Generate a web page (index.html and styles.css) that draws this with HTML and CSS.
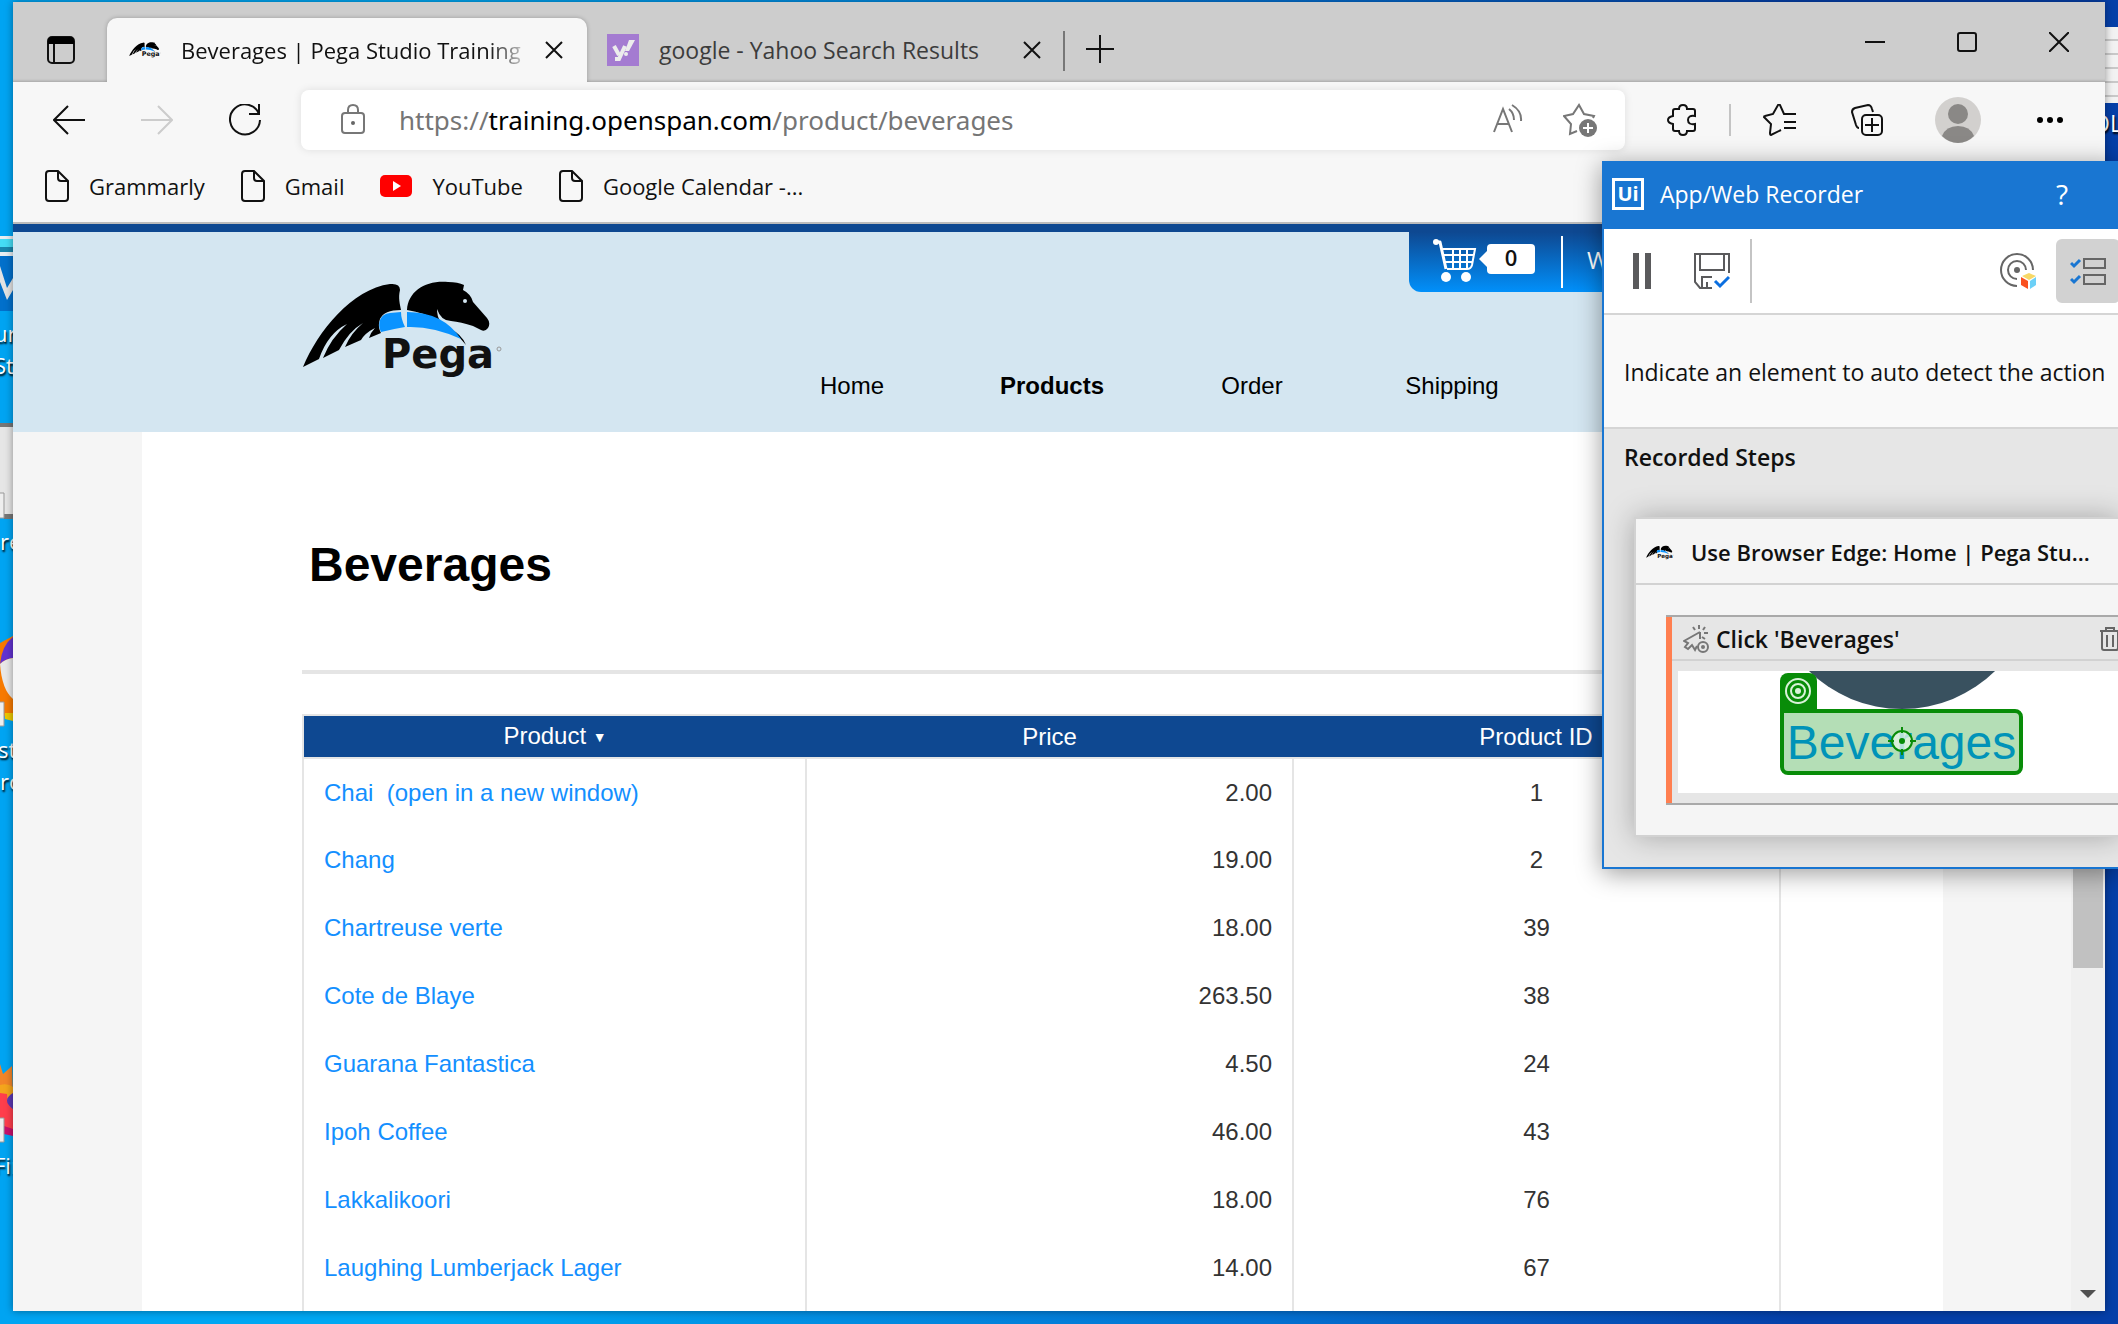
FILE: index.html
```html
<!DOCTYPE html>
<html lang="en">
<head>
<meta charset="utf-8">
<title>Beverages | Pega Studio Training</title>
<link rel="stylesheet" href="styles.css">
</head>
<body>
<svg class="defs" aria-hidden="true">
  <symbol id="pega-logo" viewBox="0 0 200 98">
    <path d="M1 86C16 50 50 8 88 3q10-1 10 6c-2 8 0 14 1 20q-17 0-21 9c-2 6-1 10 1 14l-12 5q2-6 6-10q-10 5-14 12l-16 7q6-14 18-24q-14 8-24 27l-16 8q8-20 24-34Q26 52 17 78z"/>
    <path d="M105 29C106 10 124-1 146 1q10 0 16 3l-1 5q8 4 10 12l14 16q4 5 1 10-3 4-7 2l-8-4q-12-4-22-5q-10 0-14-12q0 14 12 20q12 4 17 16Q140 34 105 29z"/>
    <path class="mark-sky" d="M79 51q-3-6-1-12q2-6 10-7l11-1q0 7 4 15q-12 2-24 5zM105 31q36 0 54 27q-28-13-54-12z"/>
    <circle class="mark-eye" cx="163" cy="20" r="2"/>
    <text class="mark-word" x="80" y="87">Pega</text>
    <circle class="mark-reg" cx="197" cy="68" r="2"/>
  </symbol>
  <symbol id="file" viewBox="0 0 24 32">
    <path class="line" d="M4 1h9l10 10v17q0 3-3 3H4q-3 0-3-3V4q0-3 3-3zM13 1v7q0 3 3 3h7"/>
  </symbol>
</svg>

<div class="desktop">
  <svg class="icons-left" width="13" height="1324" viewBox="0 0 13 1324" aria-hidden="true">
    <path fill="#e8eef2" d="M0 236h13v20H0z"/><path fill="#45dcf5" d="M0 239h13v8H0z"/><path fill="#1a86ad" d="M0 247h13v5H0z"/>
    <path fill="#0270cb" d="M0 256h13v55H0z"/><path fill="#e3e3e3" d="M0 266l7 22 6-10v12l-6 10L0 282z"/>
    <path fill="#e6e6e6" d="M0 425h13v91H0z"/><path fill="#777" d="M0 423h13v4H0zM4 514h9v5H4z"/><path fill="#eee" stroke="#999" d="M-2 493h6v25h-6z"/>
    <path fill="#f77a00" d="M0 643l13-7v84L0 714z"/><path fill="#6233d0" d="M13 637Q2 645 0 664q5-5 13-6z"/><path fill="#e8e8e8" d="M13 658q-8 1-13 6 2 26 13 35z"/>
    <path fill="#eee" stroke="#999" d="M-2 702h6v24h-6z"/><path fill="#ecc800" d="M5 713h8v8l-8-2z"/>
    <path fill="#f38528" d="M0 1064l3 10 9-8 1 30H0z"/><path fill="#f4a51c" d="M0 1085q8-2 13 2v16H0z"/><path fill="#ff3e4c" d="M0 1093l7 1q0 10 6 15v21L0 1126z"/><path fill="#5b39b5" d="M13 1093q-12 7 0 16z"/><path fill="#c8106c" d="M4 1126l9 3v7l-9-2z"/>
    <path fill="#eee" stroke="#999" d="M-2 1118h6v24h-6z"/>
  </svg>
  <div class="labels-left" aria-hidden="true">
    <span class="lbl l1">ur</span><span class="lbl l2">St</span><span class="lbl l3">re</span><span class="lbl l4">st</span><span class="lbl l5">ro</span><span class="lbl l6">Fir</span>
  </div>
  <div class="paper" aria-hidden="true"></div>
  <span class="paper-label">OL</span>

  <div class="browser">
    <header class="tabstrip">
      <button class="tab-actions" aria-label="Tab actions">
        <svg width="28" height="28" viewBox="0 0 28 28"><rect class="line" x="1" y="1" width="26" height="26" rx="4"/><path d="M1 8V5q0-4 4-4h18q4 0 4 4v3z"/><path class="line" d="M7 8v19"/></svg>
      </button>
      <div class="tab tab-active">
        <svg width="32" height="16"><use href="#pega-logo"/></svg>
        <span class="tab-title tab-fade">Beverages | Pega Studio Training</span>
        <button class="tab-close" aria-label="Close tab"><svg width="18" height="18" viewBox="0 0 18 18"><path class="line" d="M1 1l16 16M17 1L1 17"/></svg></button>
      </div>
      <div class="tab tab-idle">
        <svg width="32" height="32" viewBox="0 0 32 32"><path fill="#a47bd1" d="M0 0h32v32H0z"/><path fill="none" stroke="#ececec" stroke-width="4" d="M7 12l5 9M18 12l-6 13H8"/><path fill="#ececec" d="M22 6h6l-6 11h-4z"/><circle fill="#ececec" cx="19" cy="20" r="2"/></svg>
        <span class="tab-title">google - Yahoo Search Results</span>
        <button class="tab-close" aria-label="Close tab"><svg width="18" height="18" viewBox="0 0 18 18"><path class="line" d="M1 1l16 16M17 1L1 17"/></svg></button>
      </div>
      <button class="new-tab" aria-label="New tab"><svg width="28" height="28" viewBox="0 0 28 28"><path class="line" d="M14 0v28M0 14h28"/></svg></button>
      <div class="window-buttons">
        <button aria-label="Minimize"><svg width="20" height="20" viewBox="0 0 20 20"><path class="line" d="M0 10h20"/></svg></button>
        <button aria-label="Maximize"><svg width="20" height="20" viewBox="0 0 20 20"><rect class="line" x="1" y="1" width="18" height="18" rx="2"/></svg></button>
        <button aria-label="Close"><svg width="20" height="20" viewBox="0 0 20 20"><path class="line" d="M0 0l20 20M20 0L0 20"/></svg></button>
      </div>
    </header>

    <div class="toolbar">
      <button aria-label="Back"><svg width="32" height="32" viewBox="0 0 32 32"><path class="line" d="M32 16H1M15 2L1 16l14 14"/></svg></button>
      <button class="disabled" aria-label="Forward"><svg width="32" height="32" viewBox="0 0 32 32"><path class="line" d="M0 16h31M17 2l14 14-14 14"/></svg></button>
      <button aria-label="Refresh"><svg width="32" height="32" viewBox="0 0 32 32"><path class="line" d="M30 10A15 15 0 1 0 31 16M30 0v10H20"/></svg></button>
      <div class="address">
        <svg class="grey" width="24" height="32" viewBox="0 0 24 32"><rect class="line" x="1" y="9" width="22" height="20" rx="3"/><path class="line" d="M7 9V6q0-5 5-5t5 5v3"/><circle cx="12" cy="19" r="2" fill="#666"/></svg>
        <a class="url" href="#">https://<b>training.openspan.com</b>/product/beverages</a>
        <button class="grey" aria-label="Read aloud"><svg width="30" height="32" viewBox="0 0 30 32"><path class="line" d="M1 28L10 5l9 23M4 20h12M16 5q5 4 5 11M19 1q10 6 9 16"/></svg></button>
        <button class="grey" aria-label="Add to favorites"><svg width="34" height="34" viewBox="0 0 34 34"><path class="line" d="M14 28l-7 3 1-10-7-8 9-2 6-9 5 9 10 2-1 2"/><circle cx="25" cy="25" r="9" fill="#777"/><path stroke="#fff" stroke-width="2" d="M25 20v10M20 25h10"/></svg></button>
      </div>
      <div class="tools">
        <button aria-label="Extensions"><svg width="30" height="32" viewBox="0 0 30 32"><path class="line" d="M8 5h4q0-4 4-4t4 4h6q2 0 2 2v5q-7-1-7 4t7 4v5q0 2-2 2h-6q0 4-4 4t-4-4H8q-2 0-2-2v-5q-5-1-5-4t5-4V7q0-2 2-2z"/></svg></button>
        <span class="rule"></span>
        <button aria-label="Favorites"><svg width="34" height="32" viewBox="0 0 34 32"><path class="line" d="M18 26l-10 5q-1 0-1-2l1-9-7-7q0-1 1-1l8-2 5-9q1-1 2 0l4 9h12M21 18h12M21 24h12"/></svg></button>
        <button aria-label="Collections"><svg width="32" height="32" viewBox="0 0 32 32"><rect class="line" x="11" y="11" width="20" height="20" rx="4"/><path class="line" d="M21 14v14M14 21h14M8 24q-2 0-3-3L1 8q0-3 3-4l13-3q3 0 4 4l1 3"/></svg></button>
        <button aria-label="Profile"><svg width="46" height="46" viewBox="0 0 46 46"><circle cx="23" cy="23" r="23" fill="#d2d0ce"/><circle cx="23" cy="17" r="10" fill="#8a8886"/><path fill="#8a8886" d="M7 39q4-10 16-10t16 10q-7 7-16 7T7 39z"/></svg></button>
        <button aria-label="Settings and more"><svg width="26" height="6" viewBox="0 0 26 6"><circle cx="3" cy="3" r="3"/><circle cx="13" cy="3" r="3"/><circle cx="23" cy="3" r="3"/></svg></button>
      </div>
    </div>

    <nav class="bookmarks" aria-label="Bookmarks">
      <a href="#"><svg width="24" height="32"><use href="#file"/></svg>Grammarly</a>
      <a href="#"><svg width="24" height="32"><use href="#file"/></svg>Gmail</a>
      <a href="#"><svg width="32" height="26" viewBox="0 0 32 26"><rect y="2" width="32" height="22" rx="5" fill="#f00"/><path fill="#fff" d="M13 8l8 5-8 5z"/></svg>YouTube</a>
      <a href="#"><svg width="24" height="32"><use href="#file"/></svg>Google Calendar -...</a>
    </nav>

    <div class="viewport">
      <div class="page">
        <header class="site-header">
          <a class="site-logo" href="#" aria-label="Pega"><svg width="200" height="98"><use href="#pega-logo"/></svg></a>
          <nav class="site-nav">
            <a href="#">Home</a><a class="current" href="#">Products</a><a href="#">Order</a><a href="#">Shipping</a>
          </nav>
          <div class="cart">
            <svg width="44" height="44" viewBox="0 0 44 44"><path fill="none" stroke="#fff" stroke-width="2" d="M10 10h32l-3 16q-1 4-5 4H14M11 16h29M12 23h28M20 10v20M27 10v20M34 10v20"/><path fill="none" stroke="#fff" stroke-width="3" stroke-linejoin="round" d="M1 3h6l6 27"/><circle cx="3" cy="3" r="3" fill="#fff"/><circle cx="13" cy="38" r="5" fill="#fff"/><circle cx="33" cy="38" r="5" fill="#fff"/></svg>
            <span class="cart-count">0</span>
            <span class="cart-welcome">Welcome</span>
          </div>
        </header>
        <main class="content">
          <h1>Beverages</h1>
          <table class="products">
            <thead><tr><th>Product <span class="sort">▼</span></th><th>Price</th><th>Product ID</th></tr></thead>
            <tbody>
              <tr><td><a href="#">Chai&nbsp; (open in a new window)</a></td><td>2.00</td><td>1</td></tr>
              <tr><td><a href="#">Chang</a></td><td>19.00</td><td>2</td></tr>
              <tr><td><a href="#">Chartreuse verte</a></td><td>18.00</td><td>39</td></tr>
              <tr><td><a href="#">Cote de Blaye</a></td><td>263.50</td><td>38</td></tr>
              <tr><td><a href="#">Guarana Fantastica</a></td><td>4.50</td><td>24</td></tr>
              <tr><td><a href="#">Ipoh Coffee</a></td><td>46.00</td><td>43</td></tr>
              <tr><td><a href="#">Lakkalikoori</a></td><td>18.00</td><td>76</td></tr>
              <tr><td><a href="#">Laughing Lumberjack Lager</a></td><td>14.00</td><td>67</td></tr>
            </tbody>
          </table>
        </main>
      </div>
      <div class="scrollbar" aria-hidden="true">
        <div class="thumb"></div>
        <svg width="16" height="8" viewBox="0 0 16 8"><path fill="#505050" d="M0 0h16L8 8z"/></svg>
      </div>
    </div>
  </div>

  <section class="recorder" aria-label="App/Web Recorder">
    <header class="rec-title">
      <span class="ui-logo">Ui</span>
      <span class="rec-name">App/Web Recorder</span>
      <button aria-label="Help">?</button>
    </header>
    <div class="rec-tools">
      <button aria-label="Pause"><svg width="36" height="36" viewBox="0 0 36 36"><path fill="#5a5a5c" d="M9 0h6v36H9zM21 0h6v36h-6z"/></svg></button>
      <button aria-label="Save"><svg width="36" height="36" viewBox="0 0 36 36"><path fill="none" stroke="#5a5a5c" stroke-width="2" d="M35 20V1H1v28l5 6h12M6 1v16h24V1M8 35V24h10M13 35v-6"/><path fill="none" stroke="#0b6fe0" stroke-width="3" d="M21 28l5 5 9-9"/></svg></button>
      <span class="rec-rule"></span>
      <button class="push" aria-label="Target"><svg width="36" height="36" viewBox="0 0 36 36"><g fill="none" stroke="#666" stroke-width="2"><path d="M33 17A16 16 0 1 0 17 33M26 17a9 9 0 1 0-9 9"/></g><circle cx="17" cy="17" r="3" fill="#666"/><path fill="#f7d867" d="M22 23l7-3 7 3-7 4z"/><path fill="#fa5120" d="M21 24l7 4v8l-7-4z"/><path fill="#6cd0f7" d="M36 24l-6 4v8l6-4z"/></svg></button>
      <button class="pressed" aria-label="Recorded steps list"><svg width="36" height="28" viewBox="0 0 36 28"><path fill="none" stroke="#666" stroke-width="2" d="M14 2h21v9H14zM14 18h21v9H14z"/><path fill="none" stroke="#1976d2" stroke-width="3" d="M1 6l3 3 6-6M1 22l3 3 6-6"/></svg></button>
    </div>
    <p class="rec-hint">Indicate an element to auto detect the action</p>
    <div class="rec-body">
      <h2>Recorded Steps</h2>
      <div class="card">
        <div class="card-title">
          <svg width="28" height="15"><use href="#pega-logo"/></svg>
          <span>Use Browser Edge: Home | Pega Stu...</span>
        </div>
        <div class="step">
          <div class="step-title">
            <svg width="26" height="28" viewBox="0 0 26 28"><g fill="none" stroke="#777" stroke-width="2"><path d="M17 7L1 16l4 2-3 4 3 2 4-4 3 5 2-4M17 7v7"/><circle cx="20" cy="22" r="5"/><path d="M16 0v4M10 2l2 3M22 2l-2 3M25 8h-4M19 12l3 2"/></g><circle cx="20" cy="22" r="2" fill="#777"/></svg>
            <span>Click 'Beverages'</span>
            <button aria-label="Delete step"><svg width="20" height="24" viewBox="0 0 20 24"><path fill="none" stroke="#666" stroke-width="2" d="M0 4h20M6 4V1h8v3M2 4v17q0 2 2 2h12q2 0 2-2V4M7 8v12M13 8v12"/></svg></button>
          </div>
          <div class="shot">
            <div class="disc"></div>
            <div class="badge"><svg width="26" height="26" viewBox="0 0 26 26"><g fill="none" stroke="#d9f2d9" stroke-width="2"><circle cx="13" cy="13" r="12"/><circle cx="13" cy="13" r="7"/></g><circle cx="13" cy="13" r="3" fill="#d9f2d9"/></svg></div>
            <div class="picked">Beverages
              <svg class="cross" width="28" height="28" viewBox="0 0 28 28"><circle cx="14" cy="14" r="10" fill="#e4f4e4" fill-opacity=".8" stroke="#088c08" stroke-width="2"/><circle cx="14" cy="14" r="3" fill="#088c08"/><path stroke="#088c08" stroke-width="2" d="M14 0v6M14 22v6M0 14h6M22 14h6"/></svg>
            </div>
          </div>
        </div>
      </div>
    </div>
  </section>
</div>
</body>
</html>
```
FILE: styles.css
```css
* { box-sizing: border-box; }

body {
  margin: 0;
  font-family: "Open Sans", "Noto Sans", sans-serif;
  font-size: 23px;
  color: #111;
}

a { color: inherit; text-decoration: none; }
svg { display: block; flex: none; }
button {
  padding: 0;
  border: 0;
  background: none;
  font: inherit;
  color: inherit;
  display: flex;
  align-items: center;
  justify-content: center;
  flex: none;
}

.defs { position: absolute; width: 0; height: 0; }
.line { fill: none; stroke: currentColor; stroke-width: 2; }
.mark-sky { fill: #0a93ff; }
.mark-eye { fill: #d4e6f1; }
.mark-reg { fill: none; stroke: #999; }
.mark-word { fill: #111; font: 700 40px "DejaVu Sans", sans-serif; }
.grey { color: #777; }

/* Desktop */
.desktop {
  position: relative;
  height: 100vh;
  overflow: hidden;
  padding: 2px 13px 13px;
  background: linear-gradient(90deg, #00a4f2 0, #00a8f2 20%, #0470d0 60%, #053fa8 85%, #053fa8 100%);
}
.icons-left { position: absolute; left: 0; top: 0; }
.labels-left { position: absolute; left: 0; top: 0; width: 13px; height: 100%; overflow: hidden; }
.lbl { position: absolute; left: 0; color: #fff; font-size: 22px; line-height: 28px; text-shadow: 1px 2px 2px #000; white-space: nowrap; }
.l1 { top: 319px; left: -6px; }
.l2 { top: 351px; left: -6px; }
.l3 { top: 527px; }
.l4 { top: 735px; left: -2px; }
.l5 { top: 767px; }
.l6 { top: 1151px; left: -6px; }
.paper { position: absolute; right: 0; top: 27px; width: 13px; height: 76px; background: repeating-linear-gradient(#f2f2f2 0 12px, #c8c8c8 12px 14px); }
.paper-label { position: absolute; right: -4px; top: 108px; color: #fff; line-height: 30px; text-shadow: 1px 2px 2px #000; }

/* Browser window */
.browser {
  position: relative;
  height: 100%;
  display: flex;
  flex-direction: column;
  background: #f7f7f7;
  box-shadow: 0 0 8px rgba(0, 0, 0, .4);
}

.tabstrip { flex: none; height: 80px; display: flex; padding-top: 16px; background: #cdcdcd; box-shadow: inset 0 -3px 3px -2px rgba(0, 0, 0, .2); }
.tab-actions { width: 94px; height: 64px; padding: 0 12px 0 14px; }
.tab { display: flex; align-items: center; height: 64px; }
.tab-active { width: 480px; padding: 0 24px 0 22px; background: #f7f7f7; border-radius: 10px 10px 0 0; box-shadow: 0 0 4px rgba(0, 0, 0, .25); clip-path: inset(-6px -6px 0 -6px); }
.tab-title { flex: 1; margin-left: 20px; overflow: hidden; line-height: 32px; white-space: nowrap; }
.tab-fade { margin-right: 22px; font-size: 22px; -webkit-mask-image: linear-gradient(90deg, #000 90%, rgba(0, 0, 0, .2)); mask-image: linear-gradient(90deg, #000 90%, rgba(0, 0, 0, .2)); }
.tab-idle { position: relative; width: 478px; padding: 0 24px 0 20px; color: #3c3c3c; }
.tab-idle::after { content: ""; position: absolute; right: 0; top: 13px; width: 2px; height: 40px; background: #777; }
.tab-idle .tab-close { color: #111; }
.new-tab { width: 70px; height: 62px; }
.window-buttons { margin-left: auto; display: flex; height: 48px; }
.window-buttons button { width: 92px; }

.toolbar { flex: none; height: 74px; display: flex; align-items: center; padding: 2px 42px 0 40px; }
.toolbar > button { width: 32px; margin-right: 56px; }
.toolbar > button:nth-child(3) { margin-right: 40px; }
.disabled { color: #ccc; }
.address {
  flex: 1;
  height: 60px;
  display: flex;
  align-items: center;
  padding: 0 28px 0 40px;
  background: #fff;
  border-radius: 8px;
  box-shadow: 0 0 8px rgba(0, 0, 0, .1);
}
.address button { margin-left: 40px; }
.url { flex: 1; margin-left: 34px; font-family: "Noto Sans", sans-serif; font-size: 26px; line-height: 36px; color: #757575; }
.url b { font-weight: 400; color: #000; }
.tools { display: flex; align-items: center; margin-left: 42px; }
.rule { width: 2px; height: 32px; margin: 0 32px; background: #c4c4c4; }
.tools > :nth-child(4) { margin-left: 54px; }
.tools > :nth-child(5) { margin: 0 56px 0 52px; }

.bookmarks { flex: none; height: 68px; display: flex; align-items: flex-start; padding: 12px 0 0 32px; gap: 36px; border-bottom: 2px solid #bbb; font-size: 22px; }
.bookmarks a { display: flex; align-items: center; gap: 20px; height: 36px; }

/* Web page */
.viewport { flex: 1; min-height: 0; display: flex; border-top: 8px solid #0e4891; }
.page { flex: 1; background: #f5f5f5; font-family: "Liberation Sans", Arial, sans-serif; font-size: 24px; overflow: hidden; }
.site-header { position: relative; height: 200px; display: flex; padding: 0 129px; background: #d4e6f1; }
.site-logo { margin: 49px 0 0 160px; }
.site-nav { display: grid; grid-template-columns: repeat(4, 200px); margin: 140px 0 0 250px; color: #000; line-height: 28px; text-align: center; }
.current { font-weight: 700; }
.cart {
  position: absolute;
  top: -8px;
  right: 129px;
  width: 533px;
  height: 68px;
  display: flex;
  align-items: center;
  padding-left: 24px;
  color: #fff;
  font-family: "Open Sans", sans-serif;
  background: linear-gradient(#0e4891 0, #0e4891 8px, #0190fa);
  border-radius: 0 0 12px 12px;
}
.cart svg { margin-top: 6px; }
.cart-count { position: relative; margin: 2px 0 0 10px; width: 48px; height: 30px; line-height: 26px; text-align: center; font-size: 22px; font-weight: 600; color: #111; background: #fff; border-radius: 4px; }
.cart-count::before { content: ""; position: absolute; left: -8px; top: 7px; border: solid transparent; border-width: 8px 8px 8px 0; border-right-color: #fff; }
.cart-welcome { margin: 8px 0 0 26px; height: 52px; line-height: 48px; padding-left: 24px; border-left: 2px solid #fff; }

.content { min-height: 1000px; margin: 0 128px 0 129px; padding: 105px 162px 0 160px; background: #fff; }
h1 { margin: 0 0 40px; padding: 0 0 77px 7px; border-bottom: 4px solid #e5e5e5; font-size: 48px; line-height: 56px; color: #000; }
.products { width: 100%; table-layout: fixed; border-collapse: collapse; color: #333; border: 2px solid #e5e5e5; }
.products th { height: 43px; padding: 0; background: #0e4891; color: #fff; font-weight: 400; line-height: 28px; border-bottom: 2px solid #e5e5e5; }
.products th:first-child { width: 503px; }
.sort { font-size: 14px; vertical-align: 2px; }
.products td { height: 68px; padding: 0 20px; border-right: 2px solid #e5e5e5; line-height: 28px; }
.products tr:last-child td { height: 100px; padding-bottom: 32px; }
.products td:nth-child(2) { text-align: right; }
.products td:nth-child(3) { text-align: center; }
.products td a { color: #138fff; }

.scrollbar { flex: none; width: 34px; background: #f0f0f0; padding: 0 2px 13px; display: flex; flex-direction: column; align-items: center; justify-content: space-between; }
.thumb { width: 30px; height: 736px; background: #c1c1c1; }

/* Recorder window */
.recorder {
  position: absolute;
  top: 161px;
  right: -2px;
  width: 518px;
  background: #e6e6e6;
  border: 2px solid #1976d2;
  border-width: 0 0 2px 2px;
  box-shadow: 0 4px 24px rgba(0, 0, 0, .4);
}
.rec-title { height: 68px; display: flex; align-items: center; padding: 0 52px 2px 8px; background: #1976d2; color: #fff; }
.ui-logo { width: 32px; height: 32px; border: 3px solid #fff; font-size: 20px; line-height: 25px; font-weight: 700; text-align: center; }
.rec-name { flex: 1; margin-left: 16px; line-height: 32px; }
.rec-title button { font-size: 28px; line-height: 32px; }
.rec-tools { height: 86px; display: flex; align-items: center; padding-left: 20px; background: #fff; border-bottom: 2px solid #d5d5d5; }
.rec-tools button { width: 36px; margin-right: 34px; }
.rec-tools button:nth-child(2) { margin: 0 20px 0 0; }
.rec-rule { width: 2px; height: 64px; background: #c4c4c4; }
.rec-tools .push { margin: 0 20px 0 auto; }
.rec-tools .pressed { width: 64px; height: 64px; margin: 0; background: #d2d2d2; border-radius: 6px; }
.rec-hint { margin: 0; height: 114px; padding-left: 20px; line-height: 114px; background: #f9f9f9; border-bottom: 2px solid #d5d5d5; white-space: nowrap; }
.rec-body { padding: 12px 0 30px 30px; }
h2 { margin: 0 0 44px -10px; font-size: 23px; line-height: 32px; font-weight: 600; }
.card { background: #f5f5f5; border: 2px solid #d2d2d2; border-right: 0; box-shadow: 0 0 28px rgba(0, 0, 0, .28); padding-bottom: 30px; }
.card-title { height: 66px; display: flex; align-items: center; padding: 2px 0 0 10px; gap: 17px; border-bottom: 2px solid #d2d2d2; font-size: 22px; font-weight: 600; white-space: nowrap; }
.step { margin: 30px 0 0 30px; height: 190px; background: #e6e6e6; border: 2px solid #a9a9a9; border-width: 2px 0; box-shadow: inset 6px 0 #ff7f50; }
.step-title { height: 44px; display: flex; align-items: center; margin-left: 6px; padding: 2px 0 0 11px; gap: 7px; border-bottom: 2px solid #d2d2d2; font-weight: 600; }
.step-title span { flex: 1; }
.shot { position: relative; margin: 10px 0 0 12px; height: 122px; background: #fff; overflow: hidden; }
.disc { position: absolute; left: 91px; top: -228px; width: 266px; height: 266px; border-radius: 50%; background: #39515f; }
.badge { position: absolute; left: 102px; top: 2px; width: 37px; height: 46px; padding: 5px; background: #088c08; border-radius: 8px 8px 0 0; }
.picked {
  position: absolute;
  left: 102px;
  top: 38px;
  width: 243px;
  height: 66px;
  border: 4px solid #088c08;
  border-radius: 0 8px 8px 8px;
  background: #b4deb6;
  color: #0093b8;
  font: 48px/60px "Liberation Sans", Arial, sans-serif;
  text-align: center;
}
.cross { position: absolute; left: 104px; top: 14px; }
```
